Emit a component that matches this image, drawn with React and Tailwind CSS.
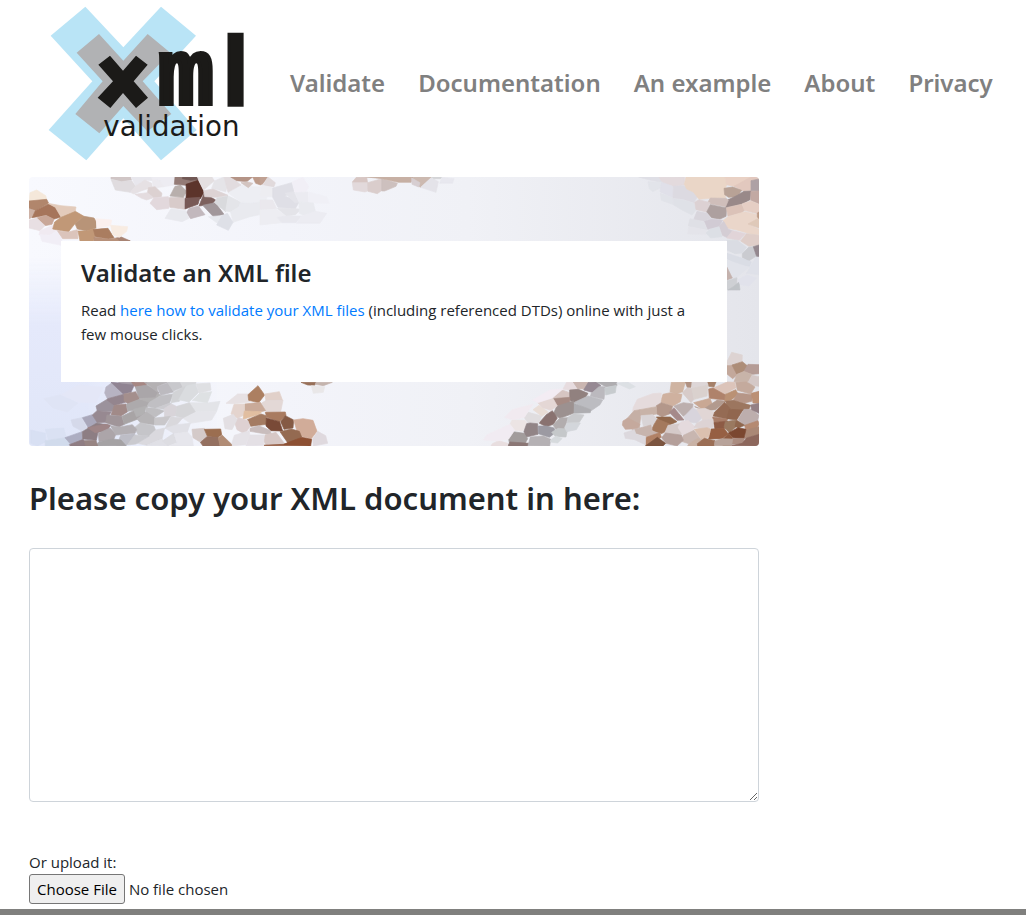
const topLeft = [
  ["27,93 30,68 50,60 77,77 80,88 50,93", "#f5e8da"],
  ["27,93 80,88 86,100 46,122 27,116", "#b1866c"],
  ["27,116 46,122 34,143 27,146", "#cdb2a6"],
  ["46,122 86,102 106,112 123,141 100,148 78,136 36,143", "#a6755b"],
  ["84,100 123,107 168,111 166,123 123,141 106,112", "#e3cbbb"],
  ["50,144 78,136 102,148 96,163 75,167", "#c9a798"],
  ["27,150 50,144 75,167 60,182 27,174", "#e8dfe3"],
  ["60,182 98,166 112,180 90,196 57,194", "#f0eaf1"],
  ["60,194 90,196 112,182 126,206 123,226 66,214", "#f1eef6"],
  ["166,124 192,139 166,160 145,186 98,177 104,156 123,142", "#c19877"],
  ["192,139 222,144 228,153 228,174 200,183 172,177 165,161", "#b89478"],
  ["112,182 145,186 172,179 174,206 128,206", "#dbc4bb"],
  ["174,183 200,183 219,176 228,190 220,213 180,213", "#c19877"],
  ["220,178 264,175 282,203 265,207 226,200", "#aa7d60"],
  ["222,201 265,207 290,204 330,213 222,213", "#b8917a"],
  ["290,204 304,201 331,213 300,213", "#a88474"],
  ["228,146 275,150 272,166 232,175", "#fbf0ee"],
  ["272,166 323,170 320,184 298,202 278,194", "#f8ece2"],
  ["273,21 332,21 334,30 305,35 273,27", "#d0c6c6"],
  ["273,28 305,35 334,31 347,49 331,67 286,60", "#e0dcdf"],
  ["334,21 395,21 397,32 375,30 347,48", "#e8e7ed"],
  ["395,21 463,21 463,45 432,50 420,32 397,30", "#edecf2"],
  ["347,48 375,30 395,40 397,52 365,62 342,72 331,67", "#e6e1e4"],
  ["397,30 420,32 432,50 400,54", "#eceaef"],
  ["385,53 405,50 426,70 424,80 400,83 382,70", "#dcd1d1"],
  ["345,73 382,68 400,83 380,90 365,85", "#e4dcdf"],
  ["402,83 445,80 453,96 446,115 410,119 390,100", "#e2d8dc"],
  ["448,83 492,80 494,118 450,112", "#d8cbca"],
  ["465,49 482,46 500,64 490,82 450,78", "#b8afac"],
  ["465,21 525,21 535,31 498,46 463,43", "#947b76"],
  ["488,22 535,21 536,28 512,31 487,26", "#705854"],
  ["498,43 534,31 552,67 541,86 498,84 499,65", "#5c342b"],
  ["495,85 540,82 534,103 495,117", "#785956"],
  ["552,70 587,90 575,103 537,108", "#7d615e"],
  ["508,115 535,108 555,134 512,146 499,128", "#c2b8bd"],
  ["548,106 586,98 612,133 581,141", "#a1979a"],
  ["532,21 576,21 583,32 551,60 541,40", "#e4dfe1"],
  ["583,33 611,21 624,43 617,65 575,55", "#e5e4e8"],
  ["551,62 579,57 624,76 590,82 554,80", "#ddd3d4"],
  ["591,84 624,78 617,125 584,98", "#d9dadd"],
  ["625,78 662,96 656,111 632,125 617,123", "#e4e5e9"],
  ["624,68 663,45 699,50 740,50 740,90 700,100 662,96", "#edeef3"],
  ["656,111 662,98 700,100 740,92 740,130 690,140 639,157 632,126", "#e9eaef"],
  ["612,21 632,21 663,45 624,67", "#e2dcdf"],
  ["632,21 698,21 680,35 650,32", "#b49486"],
  ["663,38 680,35 699,40 685,53", "#d3c4c0"],
  ["698,21 738,21 722,45 707,40", "#bc9a89"],
  ["565,140 606,137 613,157 590,158", "#e7e9ee"],
  ["606,137 622,130 639,157 625,181 590,165", "#dee0e7"],
  ["453,116 497,122 507,145 486,155 435,145", "#e8e9ee"],
];

const topMiddle = [
  ["0,21 24,21 6,44 0,40", "#c0a193"],
  ["24,21 46,38 42,50 8,47", "#e1dadc"],
  ["5,45 38,53 40,80 0,80", "#ededf1"],
  ["38,54 95,38 102,65 75,78 117,97 106,116 54,112 38,82", "#dfdfe6"],
  ["75,70 102,65 117,97 105,98", "#e4e4ea"],
  ["52,115 106,116 123,118 106,134 78,138", "#e4e4e9"],
  ["97,36 129,22 146,50 137,67 105,66", "#f1eff6"],
  ["105,68 144,66 146,98 117,96", "#ebebf1"],
  ["146,66 200,80 208,100 160,99 146,96", "#f0f0f6"],
  ["117,96 160,99 166,124 135,137 118,130", "#e9eaef"],
  ["0,90 38,90 50,116 0,120", "#eae8ed"],
  ["0,120 50,118 78,138 51,142 66,158 0,165", "#ededf2"],
  ["51,142 78,138 124,138 108,158 66,158", "#e8e8ee"],
  ["124,138 166,124 200,130 180,160 110,160", "#ececf2"],
  ["277,36 289,22 320,21 323,40 279,39", "#d7c6c3"],
  ["277,38 324,38 330,60 315,66 280,60", "#e2d9db"],
  ["323,38 365,26 367,60 352,71 324,64", "#dacdcc"],
  ["365,26 412,40 408,49 374,63 365,63", "#cdc0be"],
  ["320,21 460,21 453,37 415,37 366,26", "#c7b0a4"],
  ["460,21 515,21 482,52 456,38", "#ccb9b0"],
  ["455,24 480,38 476,51 456,43", "#d7ced1"],
  ["514,23 535,35 528,67 482,52", "#e4e3e9"],
  ["515,21 546,21 542,26 521,26", "#d3d5d7"],
  ["546,22 582,26 578,40 539,40", "#e8e8ef"],
];

const topRight = [
  ["386,21 447,21 459,38 420,30", "#dfdfe6"],
  ["414,35 456,37 451,54 429,65 418,56", "#e2e4ea"],
  ["447,22 523,21 523,45 489,49 462,42", "#e3dadd"],
  ["455,37 487,48 490,84 450,65", "#e0e0e9"],
  ["490,49 522,47 565,75 552,98 520,88 489,84", "#dcdae1"],
  ["451,70 489,84 487,103 454,91", "#e1e3e9"],
  ["490,86 520,90 552,100 558,120 546,135 516,120 490,104", "#dfe1e7"],
  ["523,43 528,21 645,21 651,43 642,63 647,83 600,85 567,88 550,66 530,57", "#ead6c7"],
  ["645,21 723,21 723,60 650,44", "#e9d1c5"],
  ["672,49 723,21 747,21 747,32 724,34 723,61 700,63", "#e2c8be"],
  ["723,32 747,27 747,63 723,62", "#aea1a5"],
  ["642,55 668,51 695,61 682,80 656,82 644,74", "#b8a296"],
  ["647,93 682,76 702,64 723,63 720,89 697,101 647,113", "#998989"],
  ["723,64 747,63 747,101 722,91", "#c2a9a3"],
  ["601,84 648,85 655,91 647,110 592,100", "#cfbeba"],
  ["554,97 567,89 600,98 590,126 558,119", "#dcd1d3"],
  ["590,126 601,104 650,114 648,139 630,147 605,143", "#ada09f"],
  ["649,113 695,103 704,120 696,128 654,139", "#dbc2b8"],
  ["697,101 723,93 747,103 747,132 703,121", "#e5cec4"],
  ["639,152 654,140 705,125 742,134 747,150 716,163 747,178 747,194 730,194 681,180 650,174", "#ead6ca"],
  ["714,162 747,144 747,174", "#dfc9b9"],
  ["742,129 747,126 747,146 742,141", "#bd9b87"],
  ["551,149 561,124 591,130 603,145 582,153", "#d8d5dc"],
  ["583,154 605,147 625,149 638,151 627,170 593,178", "#d1cbd4"],
  ["627,169 641,154 655,178 667,182 652,203 637,196", "#d4cdd4"],
  ["540,146 581,155 591,179 535,168", "#dfe0e6"],
  ["536,171 591,181 587,193 533,192", "#e4e4ea"],
  ["588,189 600,178 627,170 636,200 602,204", "#dcdfe5"],
  ["650,204 668,182 706,191 688,211", "#e1d4d8"],
  ["692,213 709,191 747,196 747,225 717,229", "#dfcec9"],
  ["651,211 682,211 709,232 697,249 675,251 651,240", "#dadce3"],
  ["697,251 716,232 731,230 738,259 714,274 697,262", "#cacbd0"],
  ["730,230 747,225 747,260 740,260", "#94888f"],
  ["651,250 697,265 724,276 719,289 684,286 651,266", "#dadde5"],
  ["651,270 716,292 679,323 665,325 651,296", "#e1e3ea"],
  ["720,291 738,261 747,262 747,314 710,310", "#dfe1e9"],
  ["651,292 667,324 651,330", "#c4b2ad"],
  ["651,332 681,323 680,352 651,360", "#ced0d4"],
  ["670,350 687,336 690,360 654,360", "#bfc3c7"],
  ["683,330 710,315 740,324 717,348 692,344", "#e1e2eb"],
];

const bottomLeft = [
  ["72,86 123,74 174,99 142,126 99,114", "#dfe4f5"],
  ["123,74 175,45 250,52 228,98 176,97", "#e4e7f7"],
  ["32,180 76,190 78,215 52,228 32,220", "#d8e0f3"],
  ["76,178 131,174 140,207 85,209", "#dae1f3"],
  ["76,212 137,203 157,226 76,228", "#d1dbec"],
  ["153,150 185,143 201,174 187,184 159,169", "#d5d9ea"],
  ["187,143 217,134 232,157 206,175", "#a9a7ba"],
  ["135,203 186,185 187,209 153,224", "#adaec2"],
  ["254,69 258,51 276,38 310,73 262,86", "#b7b3c2"],
  ["273,37 344,43 333,67 310,72", "#908492"],
  ["295,37 344,37 335,43", "#a49ba4"],
  ["335,37 381,37 379,48 345,50", "#a68783"],
  ["346,51 381,45 417,67 408,85 357,86", "#aaa6a9"],
  ["373,37 442,37 411,50 413,67", "#b4b1b3"],
  ["411,50 448,37 460,66 422,76", "#bcbabf"],
  ["442,37 481,37 489,52 460,63", "#c8c8cc"],
  ["481,37 528,37 526,44 489,52", "#d6d7da"],
  ["263,86 311,73 316,97 276,109 258,91", "#94858e"],
  ["312,72 347,65 359,88 325,102 312,93", "#a48f8d"],
  ["228,108 258,90 284,109 276,124 232,123", "#9b929c"],
  ["283,106 318,102 323,125 303,138 273,134", "#a18a88"],
  ["319,103 358,88 390,92 381,114 323,124", "#adaaac"],
  ["357,86 406,83 413,70 422,76 390,98", "#b3b1b2"],
  ["389,96 422,77 460,72 448,100 407,115 381,109", "#c0bfc3"],
  ["460,67 499,47 478,94 453,98", "#d2d3d6"],
  ["499,48 526,42 536,67 507,96 476,89", "#dadcdf"],
  ["528,42 570,39 573,60 538,70", "#dfe0e3"],
  ["539,70 575,65 562,99 517,91", "#dee1e3"],
  ["508,98 562,99 600,94 590,124 526,125", "#e3e4e8"],
  ["526,125 590,124 575,150 511,160 488,144", "#e5e5ea"],
  ["217,135 231,122 273,126 257,157 232,158", "#978991"],
  ["261,135 305,139 313,163 297,171 257,158", "#a09599"],
  ["306,139 347,119 378,127 354,147 313,163", "#a8a4a5"],
  ["340,118 380,108 372,133 349,140", "#b2b1b2"],
  ["378,113 407,115 433,123 406,141 377,134", "#bfbec1"],
  ["407,115 450,99 455,102 432,118", "#cccbd0"],
  ["432,116 455,102 471,110 467,137 434,143", "#d8d4d9"],
  ["471,109 508,98 526,125 488,144 467,138", "#d5d5d8"],
  ["351,147 380,127 405,143 403,164 362,159", "#b6b4b6"],
  ["404,144 452,139 434,165 404,165", "#c9c7ca"],
  ["452,140 488,144 470,165 435,176", "#d9d8dc"],
  ["343,173 361,158 401,167 407,181 387,198 355,195", "#c5c5c9"],
  ["407,180 434,174 426,207 380,226 352,220 388,198", "#dad9de"],
  ["436,175 470,164 511,160 502,186 463,191", "#e0e0e6"],
  ["187,185 230,159 271,166 261,182 234,187 229,211 188,207", "#8d7e84"],
  ["203,173 256,162 270,166 262,181 225,188", "#9e8587"],
  ["235,190 270,174 288,192 280,211 237,214", "#aca5a9"],
  ["271,167 300,171 337,164 350,178 345,190 287,195", "#b3afb3"],
  ["302,196 344,191 344,207 318,227 290,226", "#bdbdc6"],
  ["344,195 388,198 348,222 322,225", "#cacacf"],
  ["237,215 279,207 303,210 318,227 225,228", "#a5a2a4"],
  ["189,212 228,211 233,228 188,228", "#978482"],
  ["148,224 190,208 195,228 151,228", "#8f7d83"],
  ["380,226 426,207 446,228", "#e0e0e6"],
  ["427,213 461,190 471,218 446,228", "#dddde2"],
  ["463,191 502,186 516,200 520,228 446,228 471,218", "#e6e6ec"],
  ["618,100 653,72 684,72 690,96 639,101", "#e7e1e3"],
  ["684,74 714,47 734,75 716,98 686,91", "#ac7f61"],
  ["734,72 778,65 788,92 738,93", "#e1d0c9"],
  ["725,99 739,91 789,91 782,125 740,127", "#e3d8d6"],
  ["674,102 721,97 737,122 706,128 674,122", "#c9aa99"],
  ["633,132 642,103 673,102 673,135 652,145", "#e4d4ce"],
  ["669,148 673,123 725,125 718,133", "#e1bea0"],
  ["682,149 723,132 739,137 739,163 692,169", "#a47b62"],
  ["736,127 796,126 798,136 779,155 740,142", "#a97b60"],
  ["739,144 779,155 788,183 753,182 738,168", "#794a37"],
  ["782,155 796,137 821,150 819,174 792,178", "#855a44"],
  ["821,150 849,146 879,151 891,184 874,206 835,197", "#d1ac99"],
  ["780,185 814,177 838,184 845,201 805,221", "#946a51"],
  ["643,155 656,143 684,152 690,170 674,192 651,179", "#ded1d2"],
  ["610,145 640,133 651,149 636,179 615,176", "#e3dfe3"],
  ["690,175 716,167 750,181 755,195 690,184", "#c9bdbd"],
  ["731,213 735,195 768,187 794,221 738,225", "#d7c8c6"],
  ["732,226 790,223 845,202 875,208 872,228", "#8d5033"],
  ["878,206 893,184 917,197 923,220 880,228", "#dfd9de"],
  ["643,196 688,182 689,193 677,224 633,228", "#e5e2e7"],
  ["689,195 732,195 731,226 678,227", "#e4e0e5"],
  ["516,178 553,175 561,201 539,215 519,203", "#d4cac9"],
  ["553,178 602,177 605,194 592,203 562,199", "#9b6e50"],
  ["541,217 561,200 595,202 600,228 549,228", "#947060"],
  ["595,204 606,195 634,222 635,228 600,228", "#b18c75"],
  ["843,37 888,37 884,46 863,45", "#976f58"],
  ["888,37 937,37 910,47 886,43", "#c4b4ad"],
  ["874,47 914,50 910,67 880,70", "#e9e7e8"],
];

const bottomRight = [
  ["771,65 785,37 817,45 816,65 797,70 771,76", "#ddd3d2"],
  ["771,77 798,74 802,104 788,116 771,102", "#c3a89b"],
  ["786,75 817,65 834,79 821,95 800,102", "#ad8d78"],
  ["821,95 834,73 867,74 867,101 848,103", "#b59c96"],
  ["800,104 822,94 846,104 835,125 792,125", "#c8b4a9"],
  ["829,138 846,106 867,110 867,139 852,137", "#d4c8c7"],
  ["797,127 829,125 855,141 842,162 802,151", "#c4aa9d"],
  ["728,145 771,126 794,127 798,143 760,164", "#dcc4ba"],
  ["711,126 738,126 732,141 716,139", "#a58069"],
  ["763,164 797,149 805,163 785,179 764,185", "#ba9174"],
  ["790,181 803,159 849,164 845,184 824,189", "#b69687"],
  ["844,160 867,154 867,190 849,189", "#bb9075"],
  ["716,147 729,144 765,164 763,180 718,175", "#af826b"],
  ["600,155 604,127 646,126 638,155 619,162", "#cfb4a2"],
  ["646,126 666,126 663,142 652,143", "#b09181"],
  ["666,126 711,126 714,135 665,145", "#ddd6d7"],
  ["637,158 652,143 667,146 672,178 663,188", "#d7cbc9"],
  ["665,145 714,135 711,168 673,178", "#dad1ce"],
  ["571,187 579,163 601,158 636,163 631,185 609,198", "#cfb19f"],
  ["490,202 502,178 548,161 574,159 572,187 541,207 488,213", "#e5dbdc"],
  ["559,197 574,188 608,199 600,221 576,230 559,221", "#b3978a"],
  ["510,209 559,200 560,222 548,224 512,227", "#c8b3a8"],
  ["612,198 640,188 669,192 667,213 640,229", "#bcafae"],
  ["671,188 720,175 727,193 698,209", "#c9a894"],
  ["674,200 698,209 742,180 767,184 736,209 705,212", "#b29a8e"],
  ["642,230 668,203 681,211 698,231 681,249 648,245", "#d8d4dc"],
  ["696,234 680,207 705,205 736,218 729,238 698,241", "#e1d6d5"],
  ["767,184 790,181 842,196 837,207 801,215 772,204", "#9c765f"],
  ["734,216 764,187 781,207 773,238 730,228", "#956b54"],
  ["770,236 778,208 819,210 800,240", "#91664f"],
  ["804,239 822,208 845,208 867,226 861,246 825,257", "#bdaead"],
  ["842,195 867,190 867,220 845,209", "#948085"],
  ["728,231 771,237 770,244 732,248", "#a97d68"],
  ["731,248 773,243 773,264 735,267", "#8d5b45"],
  ["766,245 797,240 801,258 778,278 762,262", "#9a7960"],
  ["799,240 824,256 805,264 795,259", "#8f674e"],
  ["824,256 864,242 867,253 860,266 827,270", "#b58a72"],
  ["827,271 867,260 867,283 825,295", "#aa8876"],
  ["775,279 804,263 828,268 822,297 789,293", "#7b4730"],
  ["716,297 723,267 762,265 775,282 756,296", "#965f43"],
  ["759,297 776,281 788,293 783,318 759,318", "#8e5a40"],
  ["788,295 823,295 819,312 785,313", "#ab8c80"],
  ["784,317 817,310 829,294 867,283 867,318", "#8d675c"],
  ["471,236 492,212 510,209 512,229 508,264 478,252", "#c5afa5"],
  ["459,243 474,234 510,253 502,266 466,268 457,255", "#c5a99d"],
  ["513,227 548,224 561,236 550,255 520,258", "#d9d4d6"],
  ["559,231 601,231 621,245 598,255 570,242", "#91684c"],
  ["598,217 612,203 642,240 621,241", "#a5898a"],
  ["550,257 562,237 599,252 583,277 569,283 545,270", "#a4795d"],
  ["509,264 543,255 547,273 573,282 532,290 496,280 486,269", "#c7b4ad"],
  ["585,278 594,256 631,251 624,264 637,282 598,284", "#d5cac9"],
  ["624,261 633,246 654,241 674,260 671,270 638,285", "#e4dadd"],
  ["672,262 681,249 698,241 729,238 730,262 700,266", "#ddd3d4"],
  ["640,286 672,271 691,296 656,311 634,304", "#c8b6b0"],
  ["673,268 711,263 722,267 716,291 694,298", "#dbc0af"],
  ["525,293 569,278 574,292 545,308 528,317", "#b18165"],
  ["526,318 562,292 587,310 579,318", "#7c5540"],
  ["575,293 586,279 634,285 640,301 621,318 588,310", "#b49f9a"],
  ["656,312 682,296 714,300 716,318 653,318", "#c9b2a5"],
  ["682,311 703,295 735,302 733,318 683,318", "#9b6e55"],
  ["735,303 755,296 788,297 785,317 733,317", "#b8a39a"],
  ["462,279 493,269 498,283 527,291 526,314 494,299 466,295", "#dcd8dd"],
  ["309,126 356,126 346,147 321,146", "#cab6b1"],
  ["279,147 290,126 307,127 322,148 298,151", "#e7dcdf"],
  ["341,150 355,127 379,126 393,137 371,158", "#968993"],
  ["380,126 440,126 441,137 408,140", "#afadb0"],
  ["364,160 387,140 406,140 402,178 361,169", "#bbb9be"],
  ["404,144 439,136 436,158 407,165", "#c7cbce"],
  ["440,130 473,126 496,140 478,147", "#dce0e4"],
  ["248,173 274,149 299,158 297,172 269,178", "#d6c5c2"],
  ["299,181 299,150 325,148 354,160 341,182 316,188", "#91817f"],
  ["248,176 300,172 299,190 260,199", "#a68b84"],
  ["313,187 354,168 398,180 390,194 361,214", "#bcbcc1"],
  ["308,188 362,209 361,218 310,220", "#aeadb1"],
  ["250,222 260,199 311,182 310,220 270,235", "#9c9190"],
  ["207,249 229,224 247,212 262,234 250,253 229,260", "#897270"],
  ["163,233 175,217 215,228 207,248 174,249", "#e0dddf"],
  ["189,209 207,196 235,216 216,229", "#e9ddd6"],
  ["203,188 249,175 262,198 243,211 218,203", "#e4d7d5"],
  ["120,253 126,240 165,241 173,253 157,274 134,271", "#ece4e4"],
  ["170,251 180,249 203,251 204,283 166,292 162,274", "#918486"],
  ["205,258 230,258 252,264 257,277 238,292 205,281", "#9c9aa2"],
  ["249,255 270,234 294,233 283,267 259,270", "#b2adae"],
  ["294,232 311,221 342,225 328,247 291,249", "#c9cacd"],
  ["116,297 130,275 162,280 173,296 165,311 118,308", "#a29c9c"],
  ["113,318 120,306 178,310 173,318", "#8b7775"],
  ["174,317 181,291 220,288 242,298 239,318", "#b5b1b4"],
  ["245,277 264,265 293,267 288,291 257,290", "#c5c8ca"],
  ["242,300 258,288 276,296 263,309 241,306", "#d6dadd"],
  ["284,262 292,249 331,249 319,269 290,275", "#d3d6db"],
  ["67,311 86,302 113,310 113,318 63,318", "#e8dedf"],
  ["104,232 127,209 188,193 163,232 128,239", "#f1eaf0"],
  ["188,180 240,150 279,147 248,173 203,188", "#f3ecf3"],
  ["50,285 120,253 134,271 116,297 86,302 40,300", "#f1ebf2"],
];

const patches = [
  { id: "tl", place: "translate(-9 -7) scale(.33333)", cells: topLeft },
  { id: "tm", place: "translate(231 -7) scale(.33333)", cells: topMiddle },
  { id: "tr", place: "translate(481 -7) scale(.33333)", cells: topRight },
  { id: "bl", place: "translate(-9 193) scale(.33333)", cells: bottomLeft },
  { id: "br", place: "translate(441 163) scale(.33333)", cells: bottomRight },
];

function Mosaic() {
  return (
    <svg className="absolute inset-0 h-full w-full" viewBox="0 0 730 269" preserveAspectRatio="none" aria-hidden="true">
      <defs>
        <linearGradient id="across" x1="0" x2="1" y1="0" y2="0">
          <stop offset="0" stopColor="#f8f9fe" />
          <stop offset=".35" stopColor="#f3f4fa" />
          <stop offset=".6" stopColor="#f0f1f6" />
          <stop offset="1" stopColor="#e4e5eb" />
        </linearGradient>
        <linearGradient id="down" x1="0" x2="0" y1="0" y2="1">
          <stop offset=".3" stopColor="#e2e8fb" stopOpacity="0" />
          <stop offset=".55" stopColor="#e5e9fb" />
          <stop offset="1" stopColor="#e0e6f8" />
        </linearGradient>
        <linearGradient id="fade" x1="0" x2="1" y1="0" y2="0">
          <stop offset=".3" stopColor="#fff" />
          <stop offset="1" stopColor="#000" />
        </linearGradient>
        <mask id="leftSide">
          <rect width="190" height="269" fill="url(#fade)" />
        </mask>
      </defs>
      <rect width="730" height="269" fill="url(#across)" />
      <rect width="190" height="269" fill="url(#down)" mask="url(#leftSide)" />
      {patches.map((patch) => (
        <g key={patch.id} transform={patch.place}>
          {patch.cells.map(([points, fill]) => (
            <polygon key={points} points={points} fill={fill} stroke={fill} strokeWidth="2" />
          ))}
        </g>
      ))}
    </svg>
  );
}

function Logo() {
  return (
    <svg className="h-[170px] w-[220px] shrink-0" viewBox="0 0 660 510" role="img" aria-label="xml validation">
      <path fill="#b9e4f6" d="M136 20 32 107 157 244 26 390 139 481 250 355 363 481 470 390 343 244 468 107 363 20 250 142Z" />
      <path fill="#b1b2b4" d="M177 102 110 158 188 244 106 342 178 400 250 318 322 394 394 342 308 244 391 158 323 102 250 182Z" />
      <path fill="#1b1a18" d="M210 167 175 194 219 244 173 293 211 324 249 279 288 324 324 293 281 244 323 194 288 167 249 212Z" />
      <g fill="#1b1a18">
        <text x="353" y="312" fontSize="282" fontWeight="700" stroke="#1b1a18" strokeWidth="12" fontFamily="'Liberation Mono', monospace">m</text>
        <text x="546" y="314" fontSize="294" fontWeight="700" stroke="#1b1a18" strokeWidth="8" fontFamily="'Liberation Sans', sans-serif">l</text>
        <text x="190" y="407" fontSize="83" fontFamily="'DejaVu Sans', sans-serif">validation</text>
      </g>
    </svg>
  );
}

const links = ["Validate", "Documentation", "An example", "About", "Privacy"];

export default function App() {
  return (
    <div className="bg-white font-['Open_Sans','Noto_Sans',sans-serif] text-[15px] leading-6 text-[#212529]">
      <header className="flex items-center pl-10">
        <a href="#home">
          <Logo />
        </a>
        <nav className="flex gap-[33px] pb-1 pl-[30px] font-['Noto_Sans',sans-serif] text-2xl font-semibold text-[#808080]">
          {links.map((name) => (
            <a key={name} href="#" className="whitespace-nowrap">
              {name}
            </a>
          ))}
        </nav>
      </header>

      <main className="max-w-[788px] px-[29px] pt-[7px]">
        <section className="relative overflow-hidden rounded px-8 py-16">
          <Mosaic />
          <div className="relative min-h-[141px] bg-white px-5 pt-[18px]">
            <h2 className="mb-[11px] font-['Noto_Sans',sans-serif] text-2xl leading-7 font-semibold">Validate an XML file</h2>
            <p>
              Read{" "}
              <a href="#" className="text-[#007bff]">
                here how to validate your XML files
              </a>{" "}
              (including referenced DTDs) online with just a few mouse clicks.
            </p>
          </div>
        </section>

        <form>
          <h1 className="pt-8 font-['Noto_Sans',sans-serif] text-[31px] leading-10 font-semibold">
            <label htmlFor="xml">Please copy your XML document in here:</label>
          </h1>
          <textarea id="xml" className="mt-[30px] block h-[254px] w-full rounded border border-[#ced4da] p-3" />
          <label htmlFor="file" className="mt-12 block">
            Or upload it:
          </label>
          <input
            id="file"
            type="file"
            className="block w-full file:mr-1 file:h-[30px] file:rounded-[3px] file:border file:border-solid file:border-[#767676] file:bg-[#efefef] file:px-[7px] file:text-black"
          />
        </form>
      </main>
      <footer className="mt-[5px] h-1.5 bg-[#80807e]" />
    </div>
  );
}
